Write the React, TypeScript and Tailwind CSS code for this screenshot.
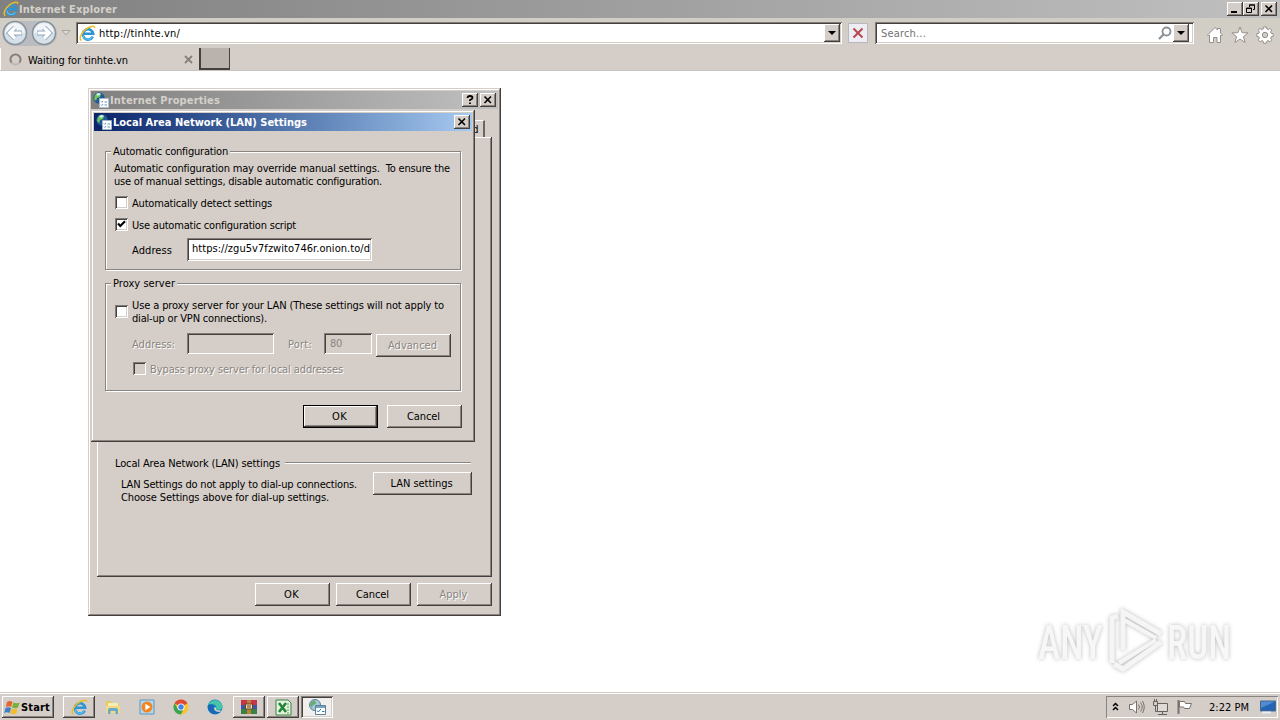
import { useLayoutEffect, useRef, useState } from "react";
import type { ReactNode } from "react";

const RAISED =
  "bg-[#d5cec8] shadow-[inset_-1px_-1px_#45403d,inset_1px_1px_#fff,inset_-2px_-2px_#8a8480]";
const SUNKEN =
  "shadow-[inset_1px_1px_#827c78,inset_-1px_-1px_#fff,inset_2px_2px_#45403d,inset_-2px_-2px_#d5cec8]";
const WINDOW =
  "bg-[#d5cec8] shadow-[inset_-1px_-1px_#45403d,inset_1px_1px_#d5cec8,inset_-2px_-2px_#8a8480,inset_2px_2px_#fff]";
const ETCHED = "border border-[#8a8480] shadow-[1px_1px_#fff,inset_1px_1px_#fff]";
const DISABLED = "text-[#8a8480] [text-shadow:1px_1px_#fff]";

// One line of UI text, tracked so that it takes up w pixels
function Label({ w, className = "", children }: { w: number; className?: string; children: string }) {
  const ref = useRef<HTMLSpanElement>(null);
  const [spacing, setSpacing] = useState(0);

  useLayoutEffect(() => {
    if (!ref.current) return;
    const natural = ref.current.getBoundingClientRect().width;
    setSpacing((w - natural) / children.length);
  }, []);

  return (
    <span
      ref={ref}
      className={`inline-block whitespace-pre shrink-0 ${className}`}
      style={{ letterSpacing: `${spacing}px` }}
    >
      {children}
    </span>
  );
}

function Button({ w, text, textWidth, disabled, isDefault }: {
  w: string;
  text: string;
  textWidth: number;
  disabled?: boolean;
  isDefault?: boolean;
}) {
  return (
    <button
      className={`flex h-[23px] shrink-0 items-center justify-center pr-0.5 ${w} ${RAISED} ${
        disabled ? DISABLED : ""
      } ${isDefault ? "border border-black" : ""}`}
    >
      <Label w={textWidth}>{text}</Label>
    </button>
  );
}

function CaptionButton({ children }: { children: ReactNode }) {
  return (
    <button className={`flex h-3.5 w-4 items-center justify-center ${RAISED}`}>
      <svg width="16" height="14" viewBox="0 0 16 14" fill="none" stroke="#000">
        {children}
      </svg>
    </button>
  );
}

const closeGlyph = <path d="M4.5 3.5l6.500 6.500M11 3.5L4.500 10" strokeWidth="1.6" />;

function Checkbox({ checked, disabled }: { checked?: boolean; disabled?: boolean }) {
  return (
    <span className={`size-[13px] shrink-0 ${SUNKEN} ${disabled ? "" : "bg-white"}`}>
      {checked && (
        <svg width="13" height="13" viewBox="0 0 13 13" fill="none" stroke="#000" strokeWidth="2.2">
          <path d="M3 5.5L5.3 8 10 3.3" />
        </svg>
      )}
    </span>
  );
}

function IeIcon({ size }: { size: number }) {
  return (
    <svg width={size} height={size} viewBox="0 0 18 18" fill="none" className="shrink-0">
      <path d="M14.5 12.3A5.5 5.5 0 1 1 15 9.3H5.2" stroke="#2d94d6" strokeWidth="2.800" />
      <path d="M13.8 12.8A5.3 5.3 0 0 1 4.2 11" stroke="#5cc3ed" strokeWidth="1.2" />
      <path d="M2.6 16.4C-.8 14.5 3 7.6 7 4.7 11 1.600 16.500-.2 16.700 3.200" stroke="#edbd27" strokeWidth="1.6" />
    </svg>
  );
}

function PropsIcon() {
  return (
    <svg width="16" height="16" viewBox="0 0 16 16" className="shrink-0">
      <circle cx="6" cy="6" r="5.7" fill="#245b91" />
      <path d="M2 3q3-3 6-1L7 5 4 6 3 9 1 7z" fill="#70c75b" />
      <path d="M3 2q3-2 5 0L5 4z" fill="#c8f1e8" />
      <path d="M6.500 6.500h9v9h-9z" fill="#fff" stroke="#a9bfce" strokeWidth=".7" />
      <path d="M8 9.500l.8.8 1.300-1.400M8 12.700l.8.8 1.300-1.400M11.500 10h2.500M11.500 13h2.500" stroke="#5c93b7" fill="none" />
    </svg>
  );
}

function NavArrow({ back }: { back?: boolean }) {
  return (
    <svg width="26" height="26" viewBox="0 0 26 26" fill="none" className="shrink-0">
      <circle cx="13" cy="13" r="11.500" fill="#d6e1ea" stroke="#8a9299" strokeWidth="1.500" />
      <path d="M3 13a10 10 0 0 1 20 0q-10-3-20 0z" fill="#f2f5f8" />
      <path
        d={back ? "M20 13H8M13 7.500L7.500 13l5.500 5.500" : "M6 13h12M13 7.500l5.500 5.500-5.500 5.500"}
        stroke="#8fa6ba"
        strokeWidth="5"
      />
      <path
        d={back ? "M19.500 13H8M13 7.500L7.500 13l5.500 5.500" : "M6.500 13h11.500M13 7.500l5.500 5.500-5.500 5.500"}
        stroke="#fff"
        strokeWidth="3.200"
      />
    </svg>
  );
}

function DropButton() {
  return (
    <span className={`flex h-[18px] w-4 items-center justify-center ${RAISED}`}>
      <svg width="8" height="4" viewBox="0 0 8 4">
        <path d="M0 0h8L4 4z" />
      </svg>
    </span>
  );
}

function BrowserChrome() {
  return (
    <header className="h-[71px] shrink-0 bg-[#d5cec8]">
      <div className="flex h-[18px] items-center bg-linear-to-r from-[#808080] to-[#c0c0c0] pr-[3px] pl-[3px]">
        <IeIcon size={16} />
        <Label w={98} className="font-bold text-[#d5d0ca]">Internet Explorer</Label>
        <div className="ml-auto flex">
          <CaptionButton>
            <path d="M4 10h6" strokeWidth="2" />
          </CaptionButton>
          <CaptionButton>
            <path d="M6.500 5V3h5v4.500H10M6 3h6M3.500 6h5v4.500h-5zM3 6.500h6" />
          </CaptionButton>
          <span className="w-[2px]" />
          <CaptionButton>{closeGlyph}</CaptionButton>
        </div>
      </div>

      <div className="flex h-[30px] items-center bg-linear-to-b from-[#d0cec5] to-[#d5cec8]">
        <div className="ml-0.5 flex h-[25px] w-[55px] items-center gap-[3px] rounded-full bg-[#b9bdc1]">
          <NavArrow back />
          <NavArrow />
        </div>
        <svg width="10" height="6" viewBox="0 0 10 6" className="ml-[4px] shrink-0">
          <path d="M1 .5h8l-4 4.500z" fill="#ddd8d3" stroke="#aaa39e" />
        </svg>
        <div className={`ml-[5px] flex h-[22px] w-[766px] items-center bg-white pr-[2px] pl-[3px] ${SUNKEN}`}>
          <IeIcon size={17} />
          <Label w={81} className="ml-[3px] mt-px">http://tinhte.vn/</Label>
          <span className="ml-auto">
            <DropButton />
          </span>
        </div>
        <span className="ml-[6px] flex size-5 items-center justify-center border border-[#bbb7c0] bg-[#eeedf3]">
          <svg width="12" height="12" viewBox="0 0 12 12" fill="none">
            <path d="M1.500 1.500l9 9M10.500 1.500l-9 9" stroke="#b64952" strokeWidth="2" />
          </svg>
        </span>
        <div className={`ml-[7px] flex h-[22px] w-[319px] items-center bg-white pr-[5px] pl-[6px] ${SUNKEN}`}>
          <Label w={45} className="mt-px text-[#727272]">Search...</Label>
          <svg width="14" height="14" viewBox="0 0 14 14" fill="none" stroke="#898f94" className="ml-auto mr-px">
            <circle cx="8.500" cy="5.500" r="4" strokeWidth="1.800" />
            <path d="M5.500 8.500L1 13" strokeWidth="2.200" />
          </svg>
          <DropButton />
        </div>
        <div className="mt-1 ml-[12px] flex gap-[7px]">
          <svg width="18" height="18" viewBox="0 0 18 18" fill="#fff" stroke="#958f8b">
            <path d="M1.500 9L9 1.500l2.500 2.500V2.500h3v4.500l2 2-1 1-1-1v7.500H11v-5H7.500v5H3.500V9l-1 1z" />
          </svg>
          <svg width="18" height="18" viewBox="0 0 18 18" fill="#fff" stroke="#958f8b">
            <path d="M9 1l2.100 5.700 6 .2-4.700 3.700 1.700 5.900L9 13.100l-5.100 3.400 1.700-5.900L.9 6.900l6-.2z" />
          </svg>
          <svg width="18" height="18" viewBox="0 0 18 18" fill="#fff" stroke="#958f8b">
            <path d="M7.500 1h3l.4 2 1.300.6L14 2.400 15.800 4.200l-1.200 1.700.6 1.400 2 .4v2.700l-2 .4-.6 1.400 1.200 1.700-1.800 1.900-1.800-1.200-1.300.6-.4 2h-3l-.4-2-1.300-.6L4 15.800 2.200 13.900l1.200-1.700-.6-1.400-2-.4V7.700l2-.4.6-1.400L2.200 4.200 4 2.400l1.800 1.200L7.100 3z" />
            <circle cx="9" cy="9" r="2.700" fill="#d5cec8" />
          </svg>
        </div>
      </div>

      <div className="flex h-[23px] items-center border-b border-[#c9c4bf]">
        <div className="flex h-full w-[199px] items-center border-l border-white pt-px pl-2">
          <svg width="13" height="13" viewBox="0 0 13 13" fill="none">
            <circle cx="6.500" cy="6.500" r="5" stroke="#bbb6b2" strokeWidth="2" />
            <path d="M2.500 9.500A5 5 0 1 1 10.500 9.500" stroke="#85807c" strokeWidth="2" />
          </svg>
          <Label w={100} className="ml-[6px] mt-px">Waiting for tinhte.vn</Label>
          <svg width="9" height="9" viewBox="0 0 9 9" className="ml-[56px]">
            <path d="M1 1l7 7M8 1L1 8" stroke="#85807c" strokeWidth="1.800" />
          </svg>
        </div>
        <div className="h-full w-[31px] border-r border-b-2 border-l-2 border-[#45403d] bg-[#bab2ad]" />
      </div>
    </header>
  );
}

function LanDialog() {
  return (
    <section className={`absolute top-[110px] left-[91px] h-[332px] w-[384px] p-[3px] ${WINDOW}`}>
      <div className="flex h-[18px] items-center bg-linear-to-r from-[#0a246a] to-[#a6caf0] pr-[2px] pl-[2px]">
        <PropsIcon />
        <Label w={194} className="ml-px font-bold text-white">Local Area Network (LAN) Settings</Label>
        <span className="ml-auto">
          <CaptionButton>{closeGlyph}</CaptionButton>
        </span>
      </div>

      <div className={`relative mt-5 ml-[11px] h-[119px] w-[356px] pt-[10px] pl-[8px] ${ETCHED}`}>
        <div className="absolute -top-[8px] left-[5px] flex h-3.5 items-center bg-[#d5cec8] px-0.5">
          <Label w={115}>Automatic configuration</Label>
        </div>
        <div className="flex flex-col items-start">
          <Label w={336}>Automatic configuration may override manual settings.  To ensure the</Label>
          <Label w={268}>use of manual settings, disable automatic configuration.</Label>
        </div>
        <div className="mt-2 flex h-[13px] items-center gap-[4px] pl-px">
          <Checkbox />
          <Label w={140} className="mt-0.5">Automatically detect settings</Label>
        </div>
        <div className="mt-[9px] flex h-[13px] items-center gap-[4px] pl-px">
          <Checkbox checked />
          <Label w={164} className="mt-0.5">Use automatic configuration script</Label>
        </div>
        <div className="mt-[7px] flex h-[23px] items-center pl-[18px]">
          <Label w={40} className="mt-0.5">Address</Label>
          <div className={`ml-[15px] flex h-[23px] w-[185px] items-center overflow-hidden bg-white pb-[3px] pl-[5px] ${SUNKEN}`}>
            <Label w={178}>https://zgu5v7fzwito746r.onion.to/d</Label>
          </div>
        </div>
      </div>

      <div className={`relative mt-[13px] ml-[11px] h-[108px] w-[356px] pt-[15px] pl-[9px] ${ETCHED}`}>
        <div className="absolute -top-[8px] left-[5px] flex h-3.5 items-center bg-[#d5cec8] px-0.5">
          <Label w={62}>Proxy server</Label>
        </div>
        <div className="flex items-start gap-[4px]">
          <div className="flex pt-1.5">
            <Checkbox />
          </div>
          <div className="flex flex-col items-start">
            <Label w={312}>Use a proxy server for your LAN (These settings will not apply to</Label>
            <Label w={135}>dial-up or VPN connections).</Label>
          </div>
        </div>
        <div className="mt-2 flex h-6 items-center pl-[17px]">
          <Label w={43} className={`mb-0.5 ${DISABLED}`}>Address:</Label>
          <div className={`mb-[3px] ml-[12px] h-[21px] w-[87px] ${SUNKEN}`} />
          <Label w={24} className={`mb-0.5 ml-[14px] ${DISABLED}`}>Port:</Label>
          <div className={`mb-[3px] ml-[12px] flex h-[21px] w-[48px] items-center pl-[6px] text-[#8a8480] ${SUNKEN}`}>
            <Label w={12}>80</Label>
          </div>
          <span className="w-1" />
          <div className="pt-px">
            <Button w="w-[75px]" text="Advanced" textWidth={49} disabled />
          </div>
        </div>
        <div className="mt-[5px] flex h-[13px] items-center gap-[4px] pl-[18px]">
          <Checkbox disabled />
          <Label w={193} className={`mt-0.5 ${DISABLED}`}>Bypass proxy server for local addresses</Label>
        </div>
      </div>

      <div className="mt-[14px] mr-[10px] flex justify-end gap-[9px]">
        <Button w="w-[75px]" text="OK" textWidth={15} isDefault />
        <Button w="w-[75px]" text="Cancel" textWidth={33} />
      </div>
    </section>
  );
}

function PropertiesDialog() {
  return (
    <section className={`absolute top-[88px] left-[88px] h-[528px] w-[413px] p-[3px] ${WINDOW}`}>
      <div className="flex h-[18px] items-center bg-linear-to-r from-[#808080] to-[#c0c0c0] pr-[2px] pl-[2px]">
        <PropsIcon />
        <Label w={110} className="ml-px font-bold text-[#d5d0ca]">Internet Properties</Label>
        <div className="ml-auto flex gap-[2px]">
          <CaptionButton>
            <path d="M5.500 5q0-2 2.500-2t2.500 1.800Q10.500 6 8 7v1M8 9.500V11" strokeWidth="1.800" />
          </CaptionButton>
          <CaptionButton>{closeGlyph}</CaptionButton>
        </div>
      </div>

      <div className="mt-[11px] mr-[13px] flex h-[17px] justify-end">
        <div className="flex w-[14px] items-center justify-center border-t border-r-2 border-t-white border-r-[#6b6460] pr-[3px]">
          <span>d</span>
        </div>
      </div>
      <div className={`ml-[6px] h-[440px] w-[395px] pt-[320px] pl-[18px] ${RAISED}`}>
        <div className="flex h-[13px] items-center">
          <Label w={165}>Local Area Network (LAN) settings</Label>
          <div className="mb-[2px] ml-[5px] h-[2px] w-[186px] border-t border-b border-t-[#8a8480] border-b-white" />
        </div>
        <div className="mt-[2px] flex">
          <div className="mt-[6px] ml-[6px] flex w-[252px] flex-col items-start">
            <Label w={236}>LAN Settings do not apply to dial-up connections.</Label>
            <Label w={208}>Choose Settings above for dial-up settings.</Label>
          </div>
          <Button w="w-[99px]" text="LAN settings" textWidth={62} />
        </div>
      </div>
      <div className="mt-[6px] mr-[6px] flex justify-end gap-[6px]">
        <Button w="w-[75px]" text="OK" textWidth={15} />
        <Button w="w-[75px]" text="Cancel" textWidth={33} />
        <Button w="w-[75px]" text="Apply" textWidth={28} disabled />
      </div>
    </section>
  );
}

function Watermark() {
  return (
    <svg
      width="220"
      height="80"
      viewBox="0 0 220 80"
      className="absolute top-[600px] left-[1030px] drop-shadow-[0_0_2px_#bbbbbb]"
    >
      <g fill="#f7f7f7" fontFamily="Roboto, sans-serif" fontSize="49" fontWeight="500">
        <text x="8" y="59" textLength="65" lengthAdjust="spacingAndGlyphs">ANY</text>
        <text x="137" y="59" textLength="64" lengthAdjust="spacingAndGlyphs">RUN</text>
      </g>
      <g fill="none" stroke="#f5f5f5" strokeWidth="5">
        <path d="M82 63V18l6-2M93 50V12l38 22M131 42L93 69l-9-5" />
        <path d="M94 20l32 18M89 63l37-23" strokeWidth="4" />
      </g>
    </svg>
  );
}

function TaskItem({ open, active, children }: { open?: boolean; active?: boolean; children: ReactNode }) {
  return (
    <div
      className={`flex h-[22px] w-8 items-center justify-center ${open ? RAISED : ""} ${
        active ? `bg-[#f1eeeb] ${SUNKEN}` : ""
      }`}
    >
      {children}
    </div>
  );
}

function Taskbar() {
  return (
    <footer className="flex h-7 shrink-0 items-center border-t border-[#d5cec8] bg-[#d5cec8] pt-px pr-0.5 pl-0.5 shadow-[inset_0_1px_#fff]">
      <button className={`flex h-[22px] w-[52px] items-center pl-[2px] ${RAISED}`}>
        <svg width="17" height="17" viewBox="0 0 17 17">
          <path d="M3 3q3-2 5.500 0L7.200 8Q5 6.500 1.800 8z" fill="#e56530" />
          <path d="M9.500 3.400q3 1.500 6 0L14 8.500q-3 1.400-6 0z" fill="#79ae38" />
          <path d="M1.500 9q3-1.600 5.500 0l-1.300 5Q3 12.500.200 14z" fill="#3f80c4" />
          <path d="M7.700 9.500q3 1.500 6 0l-1.400 5q-3 1.500-6 0z" fill="#f2bb2b" />
        </svg>
        <Label w={29} className="font-bold">Start</Label>
      </button>
      <div className="ml-[9px] flex gap-[2px]">
        <TaskItem open>
          <IeIcon size={17} />
        </TaskItem>
        <TaskItem>
          <svg width="16" height="16" viewBox="0 0 16 16">
            <path d="M1 2h5l1 2h7v10H1z" fill="#e8c865" />
            <path d="M3 4h10v4H3z" fill="#f9edb2" />
            <path d="M1 7h14v7H1z" fill="#f0d987" />
            <path d="M3 15V11q0-2 2-2h6q2 0 2 2v4h-2.500v-3h-5v3z" fill="#6ba9cc" />
          </svg>
        </TaskItem>
        <TaskItem>
          <svg width="16" height="16" viewBox="0 0 16 16">
            <path d="M1 1h14v14H1z" fill="#b5d7ed" stroke="#5a97bd" />
            <circle cx="8" cy="8" r="5.500" fill="#f08522" />
            <path d="M6.300 4.800v6.400L11.500 8z" fill="#fff" />
          </svg>
        </TaskItem>
        <TaskItem>
          <svg width="16" height="16" viewBox="0 0 16 16">
            <circle cx="8" cy="8" r="7.500" fill="#f7c52e" />
            <path d="M1.500 4.250A7.500 7.500 0 0 1 14.500 4.250L8 8z" fill="#df4937" />
            <path d="M1.500 4.250A7.500 7.500 0 0 0 8 15.500L10.500 10 5 10z" fill="#3aa456" />
            <circle cx="8" cy="8" r="3.600" fill="#fff" />
            <circle cx="8" cy="8" r="2.700" fill="#4384e8" />
          </svg>
        </TaskItem>
        <TaskItem>
          <svg width="16" height="16" viewBox="0 0 16 16">
            <circle cx="8" cy="8" r="7.500" fill="#1781cb" />
            <path d="M1 6C3 0 14-1 15.500 7q0 4-4.500 4-3-1-1.500-3Q8 4 1 6z" fill="#46c5a8" />
            <path d="M1 6q5-2 6 1-3 5 6 6-6 4-10 0-3-3-2-7z" fill="#1769b5" />
            <path d="M9 8q-1 4 5 3.500l-1 1.500Q7 13 7 9z" fill="#d5cec8" />
          </svg>
        </TaskItem>
        <TaskItem open>
          <svg width="18" height="16" viewBox="0 0 18 16">
            <path d="M1 1h16v5H1z" fill="#c8354b" />
            <path d="M1 6h16v4H1z" fill="#3b57a5" />
            <path d="M1 10h16v5H1z" fill="#398144" />
            <path d="M7 1h4v14H7z" fill="#be8036" />
            <path d="M5.500 5h7v5h-7z" fill="#eee0a0" stroke="#694421" />
            <path d="M8 6v3M10 6v3" stroke="#60352f" />
          </svg>
        </TaskItem>
        <TaskItem open>
          <svg width="17" height="17" viewBox="0 0 17 17">
            <path d="M1 1h12l3 3v12H1z" fill="#e5f1df" stroke="#358540" />
            <path d="M12 5h2M12 8h2M12 11h2M12 14h2" stroke="#57a15b" />
            <path d="M4 4l7 9M11 4l-7 9" stroke="#248437" strokeWidth="2.600" />
          </svg>
        </TaskItem>
        <TaskItem active>
          <svg width="17" height="16" viewBox="0 0 17 16">
            <circle cx="6" cy="6" r="5.500" fill="#a7c9da" stroke="#567f99" />
            <path d="M2 3l4-2 1 4-3 1-1 3-2-3z" fill="#69aa72" />
            <path d="M6.500 6.500h10v9h-10z" fill="#fff" stroke="#57829b" />
            <path d="M7 8h9" stroke="#78a3bc" strokeWidth="2" />
            <path d="M8 11.500l1.300 1.500L12 10M13 12.500h2.500" fill="none" stroke="#2c7a9e" />
          </svg>
        </TaskItem>
      </div>

      <div className="ml-auto flex h-[22px] w-[172px] items-center pl-[6px] shadow-[inset_1px_1px_#8a8480,inset_-1px_-1px_#fff]">
        <svg width="8" height="10" viewBox="0 0 8 10" fill="none" stroke="#000" strokeWidth="1.500">
          <path d="M1 4l2.500-2.500L6 4M1 8l2.500-2.500L6 8" />
        </svg>
        <svg width="18" height="16" viewBox="0 0 18 16" fill="none" stroke="#77716d" className="ml-2">
          <path d="M1.500 5.500h3L8.500 2v12l-4-3.500h-3z" fill="#fff" />
          <path d="M10.500 5.500q2 2.500 0 5M12.500 3.500q3.500 4.500 0 9M14.500 2q3.500 6 0 12" />
        </svg>
        <svg width="17" height="17" viewBox="0 0 17 17" fill="none" stroke="#66615d" className="ml-[6px]">
          <path d="M5.500 4.500h10v8h-10z" fill="#dedbd7" />
          <path d="M1.500 2.500h4v4h-4zM2.500 0v2M4.500 0v2M3.500 6.500v6h2M10.500 13v2M6 15.500h9" />
        </svg>
        <svg width="17" height="16" viewBox="0 0 17 16" fill="#fff" stroke="#77716d" className="ml-[7px]">
          <path d="M2.500 1v14" strokeWidth="2" />
          <path d="M3.500 2.500h5l1 2h6l-2 5h-5l-1-1.500h-4z" />
        </svg>
        <Label w={40} className="ml-[16px]">2:22 PM</Label>
        <svg width="16" height="14" viewBox="0 0 16 14" className="ml-[11px]">
          <path d="M.500 1h15v10H.500z" fill="#2365b4" stroke="#496988" />
          <path d="M1 1.500h14L1 8z" fill="#528bd1" />
          <path d="M2 12.500h9" stroke="#e6edf3" strokeWidth="2" />
        </svg>
      </div>
    </footer>
  );
}

export default function App() {
  return (
    <div className="flex h-[720px] w-[1280px] flex-col overflow-hidden bg-white font-['DejaVu_Sans_Condensed','DejaVu_Sans',sans-serif] text-[11px] leading-[13px] text-black [font-stretch:condensed]">
      <BrowserChrome />
      <main className="grow">
        <PropertiesDialog />
        <LanDialog />
        <Watermark />
      </main>
      <Taskbar />
    </div>
  );
}
